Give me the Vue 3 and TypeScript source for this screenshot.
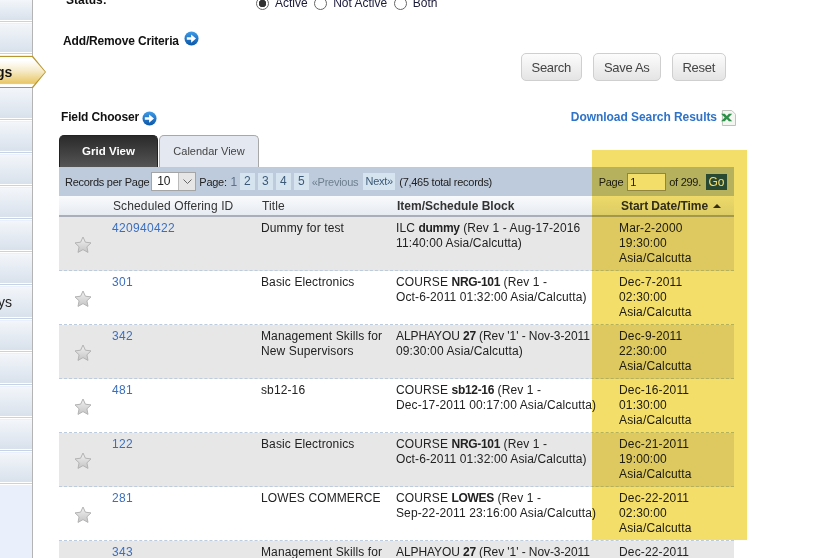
<template>
  <div class="page">
    <aside class="sidebar">
      <div v-for="(item, i) in navItems" :key="i" class="nav-item" :class="{ 'nav-item--active': item.active }">
        <span class="nav-label">{{ item.label }}</span>
      </div>
    </aside>

    <main class="main">
      <div class="status-row">
        <span class="status-label">Status:</span>
        <div class="radios">
          <label v-for="opt in statusOptions" :key="opt.label" class="radio">
            <span class="radio-dot" :class="{ 'radio-dot--on': opt.on }"></span>{{ opt.label }}
          </label>
        </div>
      </div>

      <div class="criteria">
        Add/Remove Criteria
        <svg class="go-icon" viewBox="0 0 16 16"><use href="#arrow" /></svg>
      </div>

      <div class="actions">
        <button class="btn">Search</button>
        <button class="btn">Save As</button>
        <button class="btn">Reset</button>
      </div>

      <div class="tools-row">
        <div class="chooser">
          Field Chooser
          <svg class="go-icon" viewBox="0 0 16 16">
            <defs>
              <linearGradient id="blue" x1="0" y1="0" x2="0" y2="1">
                <stop offset="0" stop-color="#3f9be8" />
                <stop offset="1" stop-color="#0b56a8" />
              </linearGradient>
              <g id="arrow">
                <circle cx="8" cy="8" r="7.5" fill="url(#blue)" />
                <path d="M3 6.6h4.6V3.6L12.8 8 7.6 12.4V9.4H3z" fill="#fff" />
              </g>
            </defs>
            <use href="#arrow" />
          </svg>
        </div>
        <a class="download">
          Download Search Results
          <svg class="xls" viewBox="0 0 16 17">
            <path d="M1.5.5h10l4 4v12h-14z" fill="#f4f6f2" stroke="#b9bdb8" />
            <path d="M0 4h4l2.2 2.4L8.4 4H12L8 8l4 4H8.4L6.2 9.6 4 12H0l4-4z" fill="#2f8f4a" />
          </svg>
        </a>
      </div>

      <div class="tabs">
        <div class="tab tab--active">Grid View</div>
        <div class="tab">Calendar View</div>
      </div>

      <section class="grid">
        <div class="toolbar">
          <span>Records per Page</span>
          <span class="select">10<span class="select-arrow"><svg viewBox="0 0 9 5" width="9" height="5"><path d="M.5.5 4.5 4.5 8.5.5" fill="none" stroke="#666" /></svg></span></span>
          <span class="pager-label">Page:</span>
          <span class="page-num">1</span>
          <a v-for="n in [2, 3, 4, 5]" :key="n" class="page-link">{{ n }}</a>
          <span class="prev">«Previous</span>
          <a class="next">Next»</a>
          <span>(7,465 total records)</span>
          <div class="jump">
            <span>Page</span>
            <span class="jump-input">1</span>
            <span>of 299.</span>
            <span class="go">Go</span>
          </div>
        </div>

        <div class="row row--head">
          <span></span>
          <span>Scheduled Offering ID</span>
          <span>Title</span>
          <strong>Item/Schedule Block</strong>
          <strong>Start Date/Time <i class="sort"></i></strong>
        </div>

        <div v-for="(r, i) in rows" :key="i" class="row" :class="{ 'row--odd': i % 2 === 0 }">
          <span class="star-cell">
            <svg class="star" viewBox="0 0 18 17">
              <defs>
                <linearGradient :id="`star${i}`" x1="0" y1="0" x2="0" y2="1">
                  <stop offset="0" stop-color="#f2f2f2" />
                  <stop offset="1" stop-color="#c4c4c4" />
                </linearGradient>
              </defs>
              <path d="M9 1l2.4 5.2 5.6.7-4.1 3.9 1.1 5.6L9 13.6l-5 2.8 1.1-5.6L1 6.9l5.6-.7z" :fill="`url(#star${i})`" stroke="#b3b3b3" />
            </svg>
          </span>
          <a class="id">{{ r.id }}</a>
          <span>{{ r.title }}</span>
          <span class="item"><span :class="{ 'line-tight': r.code === '27' }">{{ r.type }} <b>{{ r.code }}</b> {{ r.line1 }}</span><br />{{ r.line2 }}</span>
          <span class="date">{{ r.date }}<br />{{ r.time }}<br />Asia/Calcutta</span>
        </div>
      </section>
    </main>

    <div class="highlight"></div>
  </div>
</template>

<script setup lang="ts">
interface Row {
  id: string
  title: string
  type: string
  code: string
  line1: string
  line2: string
  date: string
  time: string
}

const navItems = [
  { label: '' },
  { label: '' },
  { label: 'gs', active: true },
  { label: '' },
  { label: '' },
  { label: '' },
  { label: '' },
  { label: '' },
  { label: '' },
  { label: 'ys' },
  { label: '' },
  { label: '' },
  { label: '' },
  { label: '' },
  { label: '' }
]

const statusOptions = [
  { label: 'Active', on: true },
  { label: 'Not Active', on: false },
  { label: 'Both', on: false }
]

const rows: Row[] = [
  { id: '420940422', title: 'Dummy for test', type: 'ILC', code: 'dummy', line1: '(Rev 1 - Aug-17-2016', line2: '11:40:00 Asia/Calcutta)', date: 'Mar-2-2000', time: '19:30:00' },
  { id: '301', title: 'Basic Electronics', type: 'COURSE', code: 'NRG-101', line1: '(Rev 1 -', line2: 'Oct-6-2011 01:32:00 Asia/Calcutta)', date: 'Dec-7-2011', time: '02:30:00' },
  { id: '342', title: 'Management Skills for New Supervisors', type: 'ALPHAYOU', code: '27', line1: "(Rev '1' - Nov-3-2011", line2: '09:30:00 Asia/Calcutta)', date: 'Dec-9-2011', time: '22:30:00' },
  { id: '481', title: 'sb12-16', type: 'COURSE', code: 'sb12-16', line1: '(Rev 1 -', line2: 'Dec-17-2011 00:17:00 Asia/Calcutta)', date: 'Dec-16-2011', time: '01:30:00' },
  { id: '122', title: 'Basic Electronics', type: 'COURSE', code: 'NRG-101', line1: '(Rev 1 -', line2: 'Oct-6-2011 01:32:00 Asia/Calcutta)', date: 'Dec-21-2011', time: '19:00:00' },
  { id: '281', title: 'LOWES COMMERCE', type: 'COURSE', code: 'LOWES', line1: '(Rev 1 -', line2: 'Sep-22-2011 23:16:00 Asia/Calcutta)', date: 'Dec-22-2011', time: '02:30:00' },
  { id: '343', title: 'Management Skills for New Supervisors', type: 'ALPHAYOU', code: '27', line1: "(Rev '1' - Nov-3-2011", line2: '09:30:00 Asia/Calcutta)', date: 'Dec-22-2011', time: '02:30:00' }
]
</script>

<style scoped>
.page {
  position: relative;
  display: flex;
  width: 822px;
  height: 558px;
  overflow: hidden;
  background: #fff;
  font-family: "Liberation Sans", Arial, sans-serif;
  font-size: 12px;
  color: #222;
}

.sidebar {
  flex: none;
  width: 32px;
  background: #e9f0fb;
  border-right: 1px solid #b4b4b4;
  display: flex;
  flex-direction: column;
}

.nav-item {
  position: relative;
  flex: none;
  height: 29.1px;
  margin-bottom: 4px;
  background: linear-gradient(#f3f6fa, #d8e1ec);
  box-shadow: 0 1px 0 #fff, 0 2px 0 #c6d2e6, 0 3px 0 #fff;
  display: flex;
  align-items: center;
  justify-content: flex-end;
  font-size: 14px;
  overflow: hidden;
}

.nav-item:nth-child(1) {
  height: 20px;
}

.nav-item:nth-child(2) {
  height: 28px;
}

.nav-item:nth-child(4) {
  height: 30px;
}

.nav-label {
  margin-right: 20px;
  white-space: nowrap;
}

.nav-item--active {
  width: 46px;
  height: 32px;
  margin-bottom: 0;
  background: #b8962e;
  clip-path: polygon(0 0, 33px 0, 46px 16px, 33px 32px, 0 32px);
  box-shadow: none;
  justify-content: flex-start;
  font-weight: bold;
  color: #111;
}

.nav-item--active::before {
  content: "";
  position: absolute;
  inset: 1px 1px 1px 0;
  background: linear-gradient(#fff 0%, #fff 12%, #f6eccb 45%, #e9c766 88%, #fff 92%);
  clip-path: polygon(0 0, 32px 0, 45px 15px, 32px 30px, 0 30px);
}

.nav-item--active .nav-label {
  position: relative;
  margin: 0 0 0 -4px;
}

.main {
  flex: none;
  width: 675px;
  margin-left: 26px;
  margin-top: -4px;
}

.status-row {
  display: flex;
  height: 14px;
  line-height: 14px;
  color: #111;
}

.status-label {
  width: 190px;
  margin-top: -3px;
  padding-left: 7px;
  font-weight: bold;
}

.radios {
  display: flex;
  gap: 6.5px;
}

.radio {
  display: flex;
  align-items: center;
  gap: 6px;
  color: #1a1a3a;
}

.radio-dot {
  box-sizing: border-box;
  width: 13px;
  height: 13px;
  border: 1px solid #666;
  border-radius: 50%;
  background: #fff;
}

.radio-dot--on {
  background: radial-gradient(circle, #333 0 3.5px, #fff 4px);
}

.criteria {
  display: flex;
  align-items: center;
  gap: 5px;
  margin: 23px 0 0 4px;
  height: 16px;
  font-weight: bold;
  letter-spacing: -0.15px;
  color: #111;
}

.go-icon {
  width: 15px;
  height: 15px;
  flex: none;
  margin-top: -5px;
}

.actions {
  display: flex;
  justify-content: flex-end;
  gap: 11px;
  margin: 4px 8px 0 0;
}

.btn {
  height: 28px;
  padding: 0 10px;
  border: 1px solid #cfcfcf;
  border-radius: 5px;
  background: linear-gradient(#fcfcfc, #e4e4e4);
  font: 13px "Liberation Sans", Arial, sans-serif;
  letter-spacing: -0.3px;
  color: #444;
}

.tools-row {
  display: flex;
  justify-content: space-between;
  align-items: center;
  margin-top: 28px;
  height: 16px;
}

.chooser {
  display: flex;
  align-items: center;
  gap: 3px;
  margin-left: 2px;
  font-weight: bold;
  letter-spacing: -0.15px;
  color: #111;
}

.chooser .go-icon {
  margin-top: 2px;
}

.download {
  display: flex;
  align-items: center;
  gap: 4px;
  margin-right: -2px;
  font-weight: bold;
  letter-spacing: -0.05px;
  color: #2f73c8;
}

.xls {
  width: 15px;
  height: 16px;
  margin-top: 2px;
}

.tabs {
  display: flex;
  gap: 1px;
  margin-top: 10px;
}

.tab {
  box-sizing: border-box;
  width: 100px;
  height: 32px;
  line-height: 31px;
  text-align: center;
  font-size: 11px;
  color: #444;
  background: #e4e9f1;
  border: 1px solid #a8a8a8;
  border-bottom: 0;
  border-radius: 5px 5px 0 0;
}

.tab--active {
  width: 99px;
  background: linear-gradient(#2a2a2a, #555);
  border-color: #222;
  color: #fff;
  font-size: 11.5px;
  font-weight: bold;
}

.toolbar {
  display: flex;
  align-items: center;
  height: 29px;
  padding-left: 6px;
  background: #bdcbdc;
  font-size: 11px;
  letter-spacing: -0.27px;
  color: #222;
}

.select {
  box-sizing: border-box;
  position: relative;
  width: 45px;
  height: 19px;
  margin: 0 3px 0 2px;
  padding-left: 5px;
  line-height: 17px;
  font-size: 12px;
  background: #fff;
  border: 1px solid #a5a5a5;
}

.select-arrow {
  position: absolute;
  top: 0;
  right: 0;
  bottom: 0;
  width: 16px;
  display: flex;
  align-items: center;
  justify-content: center;
  background: #e6e6e6;
  border-left: 1px solid #bbb;
}

.pager-label {
  margin-right: 1px;
}

.page-num {
  width: 12px;
  text-align: center;
  color: #5c7186;
  font-size: 12px;
}

.page-link {
  width: 15px;
  height: 17px;
  line-height: 17px;
  margin-right: 3px;
  text-align: center;
  background: #d6e4ef;
  color: #3c5a78;
  font-size: 12px;
}

.prev {
  color: #6f7f90;
}

.next {
  box-sizing: border-box;
  width: 32px;
  margin: 0 4px 0 5px;
  height: 17px;
  line-height: 17px;
  text-align: center;
  background: #d6e4ef;
  color: #3c5a78;
}

.jump {
  display: flex;
  align-items: center;
  margin-left: auto;
  margin-right: 7px;
}

.jump-input {
  box-sizing: border-box;
  width: 39px;
  height: 18px;
  line-height: 16px;
  margin: 0 3px 0 4px;
  padding-left: 2px;
  background: #fff;
  border: 1px solid #999;
}

.go {
  width: 21px;
  height: 16px;
  line-height: 16px;
  margin-left: 5px;
  text-align: center;
  background: #2a5478;
  color: #fff;
  font-size: 12px;
  letter-spacing: 0;
}

.row {
  display: grid;
  grid-template-columns: 53px 149px 135px 223px 115px;
  box-sizing: border-box;
  height: 54px;
  padding-top: 4px;
  line-height: 15px;
  letter-spacing: 0.12px;
  border-bottom: 1px dashed #bccbdd;
  color: #222;
}

.row--odd {
  background: #e7e7e7;
}

.row--head {
  height: 21px;
  padding-top: 3px;
  background: linear-gradient(#f9fafc, #e6ebf2);
  border-bottom: 2px solid #a9aeb8;
  color: #333;
}

.row--head > * {
  padding-left: 1px;
}

.row--head strong {
  letter-spacing: 0;
}

.row--head strong:last-child {
  padding-left: 2px;
  letter-spacing: -0.05px;
}

.sort {
  display: inline-block;
  margin: 0 0 2px 2px;
  border: 4px solid transparent;
  border-top: 0;
  border-bottom: 4px solid #333;
}

.star-cell {
  display: flex;
  justify-content: flex-end;
  padding: 15px 20px 0 0;
}

.star {
  width: 18px;
  height: 17px;
}

.id {
  color: #3a6fc0;
  letter-spacing: 0.33px;
}

.item,
.date {
  white-space: nowrap;
}

.item b {
  letter-spacing: -0.3px;
}

.line-tight {
  letter-spacing: -0.08px;
}

.date {
  letter-spacing: 0.15px;
}

.highlight {
  position: absolute;
  top: 150px;
  left: 592px;
  width: 155px;
  height: 390px;
  background: #f4de6a;
  mix-blend-mode: multiply;
}
</style>
